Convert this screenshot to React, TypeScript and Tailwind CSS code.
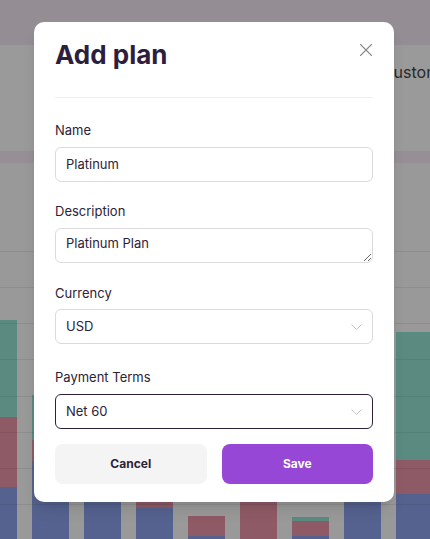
import { X } from "lucide-react";

const font = { fontFamily: "Inter, 'Noto Sans', sans-serif" };

type Bar = { teal: number; red: number; blue: number };

const bars: Bar[] = [
  { teal: 97, red: 70, blue: 52 },
  { teal: 45, red: 21, blue: 78 },
  { teal: 0, red: 0, blue: 80 },
  { teal: 0, red: 40, blue: 31 },
  { teal: 0, red: 20, blue: 3 },
  { teal: 0, red: 90, blue: 0 },
  { teal: 4, red: 15, blue: 3 },
  { teal: 0, red: 0, blue: 90 },
  { teal: 128, red: 34, blue: 45 },
];

const gridRows = [251, 287, 323, 359, 396, 432, 468, 504];

const Chevron = () => (
  <svg width="11" height="6" viewBox="0 0 11 6" fill="none" className="text-[#c4c2c8]">
    <path d="M0.5 0.5 L5.5 5.5 L10.5 0.5" stroke="currentColor" strokeWidth="1" />
  </svg>
);

const labelClass = "text-[13px] leading-[20px] text-[#2d2238]";
const fieldClass = "flex h-[35px] items-center justify-between rounded-[6px] border bg-white pl-[10px] pr-[10px] text-[13px] text-[#2d2238]";

export default function App() {
  return (
    <div className="relative h-[539px] w-[430px] overflow-hidden bg-[#999999]" style={font}>
      {/* page behind the dialog, already dimmed */}
      <div className="h-[45px] bg-[#948e94]" />
      <div className="flex h-[106px] items-start justify-end bg-[#9a9a9a] pt-[15px]">
        <span className="mr-[-34px] text-[16px] leading-[24px] text-[#282828]">Customers</span>
      </div>
      <div className="h-[12px] bg-[#968f96]" />
      <div className="relative h-[376px]">
        <div className="ml-[-20px] flex h-full items-end gap-[15px]">
          {bars.map((b, i) => (
            <div key={i} className="flex w-[37px] shrink-0 flex-col">
              {b.teal > 0 ? <div className="bg-[#5a8a80]" style={{ height: b.teal }} /> : null}
              {b.red > 0 ? <div className="bg-[#8e5a66]" style={{ height: b.red }} /> : null}
              {b.blue > 0 ? <div className="bg-[#55628f]" style={{ height: b.blue }} /> : null}
            </div>
          ))}
        </div>
        {gridRows.map((y) => (
          <div key={y} className="absolute left-0 right-0 h-px bg-black/[0.07]" style={{ top: y - 163 }} />
        ))}
      </div>

      {/* dialog */}
      <div className="absolute left-[34px] top-[22px] h-[480px] w-[360px] rounded-[10px] bg-white px-[21px] pt-[17px] shadow-lg">
        <div className="flex items-start justify-between">
          <h1 className="text-[26px] font-bold leading-[32px] text-[#2e1e3e]">Add plan</h1>
          <X className="mr-[-4px] h-[22px] w-[22px] text-[#8a8a8a]" strokeWidth={1.2} />
        </div>
        <div className="mt-[26px] h-px bg-[#efefef]" />

        <div className={`mt-[22px] ${labelClass}`}>Name</div>
        <div className={`mt-[7px] border-[#dcdadf] ${fieldClass}`}>Platinum</div>

        <div className={`mt-[19px] ${labelClass}`}>Description</div>
        <textarea
          className="mt-[7px] block h-[35px] w-full resize-y rounded-[6px] border border-[#dcdadf] px-[10px] pt-[5px] text-[13px] leading-[18px] text-[#2d2238] outline-none"
          defaultValue="Platinum Plan"
          style={font}
        />

        <div className={`mt-[20px] ${labelClass}`}>Currency</div>
        <div className={`mt-[6px] border-[#dcdadf] ${fieldClass}`}>
          <span>USD</span>
          <Chevron />
        </div>

        <div className={`mt-[23px] ${labelClass}`}>Payment Terms</div>
        <div className={`mt-[7px] border-[#2d2238] ${fieldClass}`}>
          <span>Net 60</span>
          <Chevron />
        </div>

        <div className="mt-[15px] grid grid-cols-2 gap-[15px]">
          <button className="h-[40px] rounded-[8px] bg-[#f4f4f4] text-[12px] font-bold text-[#2d2238]">Cancel</button>
          <button className="h-[40px] rounded-[8px] bg-[#9747d5] text-[12px] font-bold text-white">Save</button>
        </div>
      </div>
    </div>
  );
}
